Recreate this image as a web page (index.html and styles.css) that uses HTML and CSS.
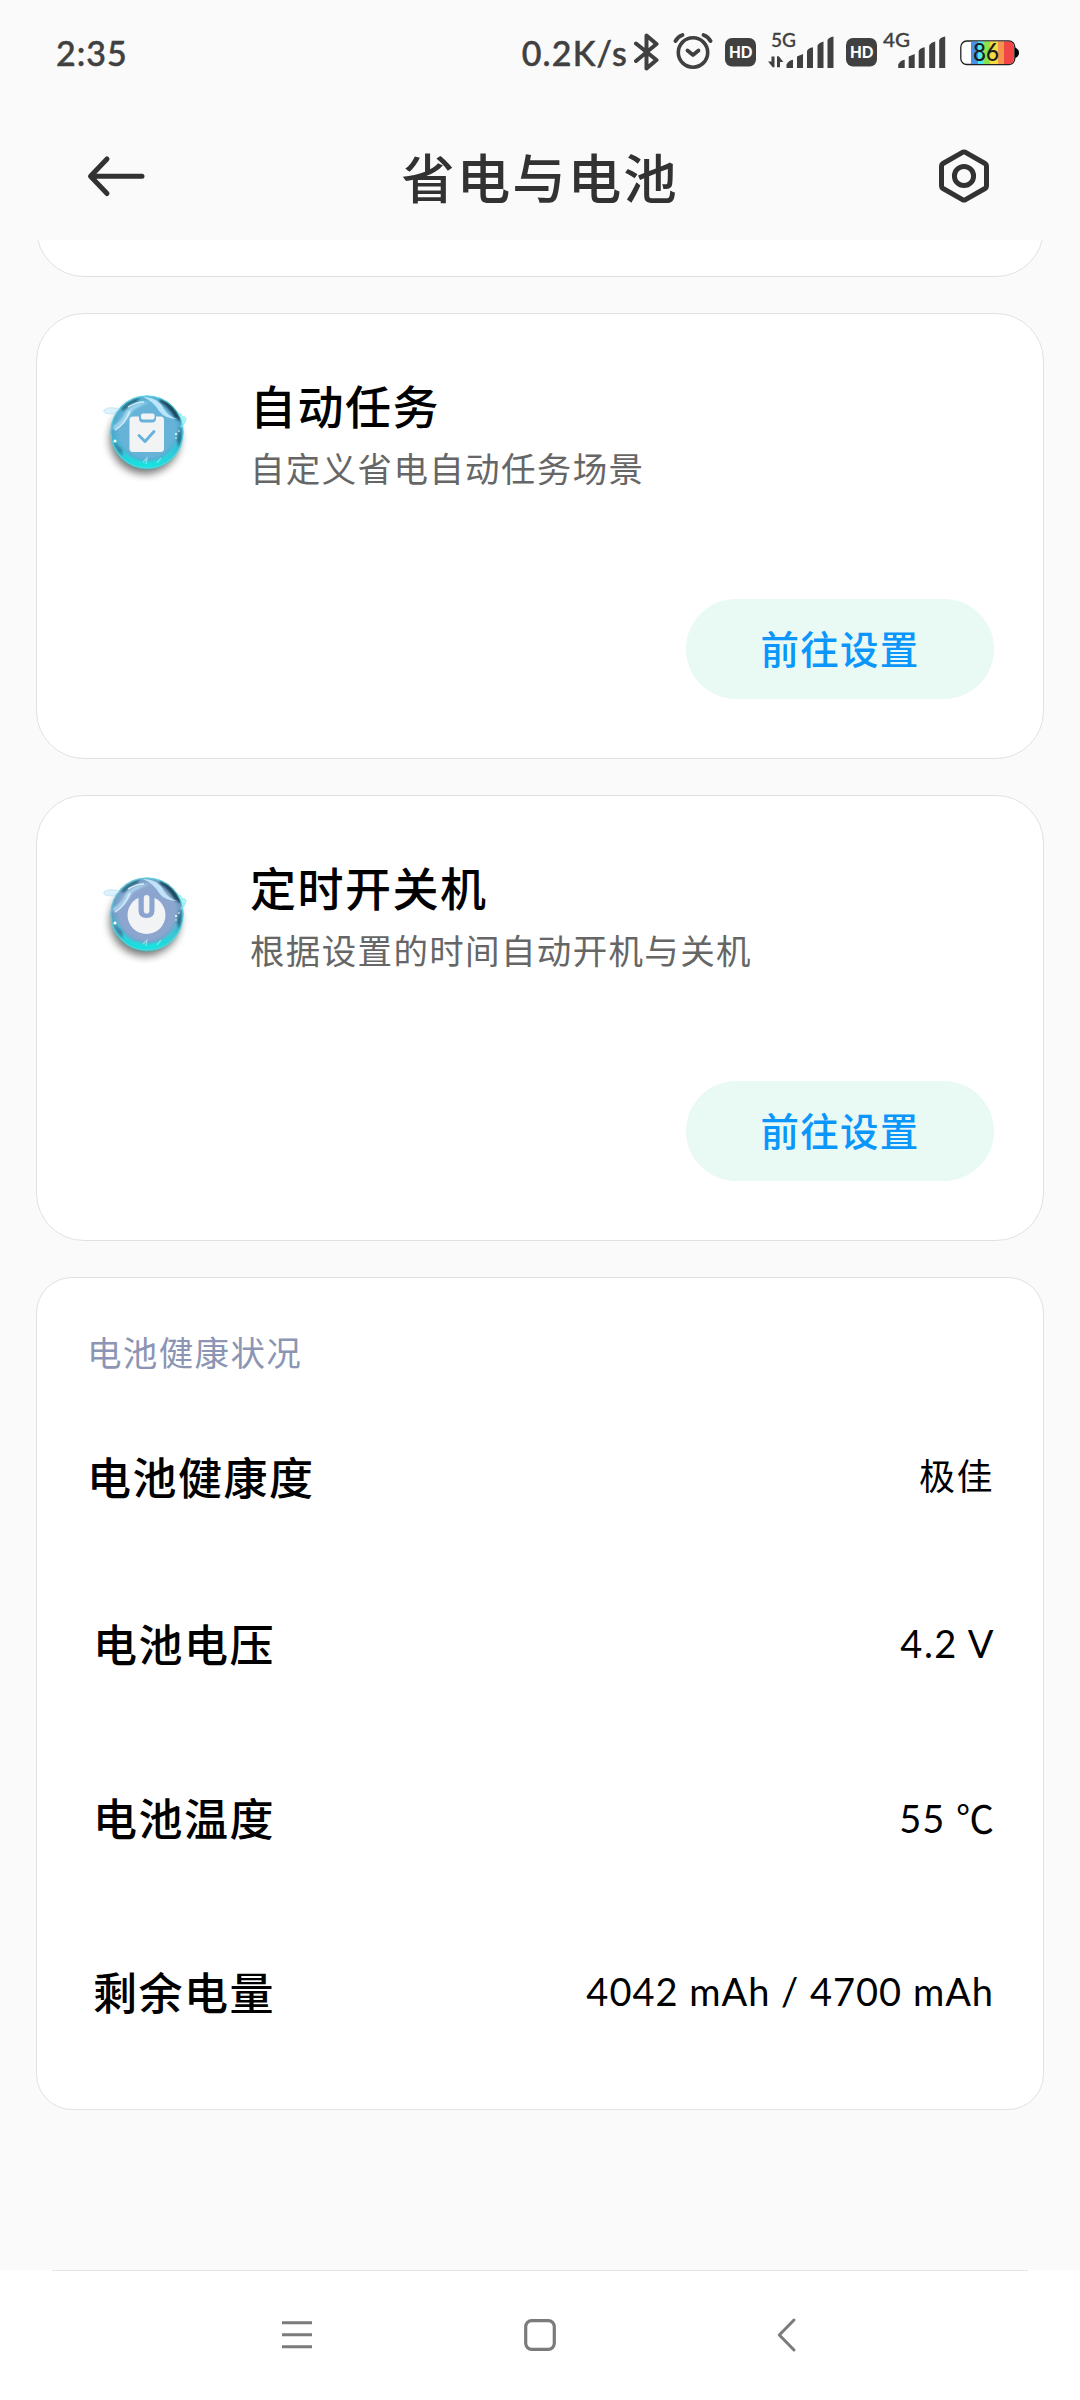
FILE: index.html
```html
<!DOCTYPE html>
<html lang="zh-CN">
<head>
<meta charset="utf-8">
<title>省电与电池</title>
<link rel="stylesheet" href="styles.css">
</head>
<body>
<div class="phone">
  <div class="status">
    <span class="clock">2:35</span>
    <div class="status-right">
      <span class="speed">0.2K/s</span>
      <svg class="bt" width="26" height="40" viewBox="0 0 26 40"><path d="M2 11.500L22.500 28 12.500 36.500V3.500L22.500 12 2 29" fill="none" stroke="#404040" stroke-width="4" stroke-linecap="round" stroke-linejoin="round"/></svg>
      <svg class="alarm" width="40" height="38" viewBox="0 0 40 38"><g fill="none" stroke="#404040" stroke-linecap="round" stroke-linejoin="round"><circle cx="20" cy="20.500" r="14.700" stroke-width="3.600"/><path d="M14.500 18.500L20 23l5.500-4.500" stroke-width="3.800"/><path d="M2.500 9Q5 4.500 9.500 3M37.500 9Q35 4.500 30.500 3" stroke-width="3.800"/></g></svg>
      <svg class="hd" width="31" height="29" viewBox="0 0 31 29"><rect width="31" height="28.500" rx="7" fill="#404040"/><text x="4" y="20" textLength="23.500" lengthAdjust="spacingAndGlyphs" class="hd-text">HD</text></svg>
      <svg class="sig5" width="67" height="46" viewBox="0 -8 67 46"><text x="3" y="17" textLength="25" lengthAdjust="spacingAndGlyphs" class="net">5G</text><g fill="#404040"><path d="M3.500 26.500h3V37.300h-1.800L0 31.500h3.500zM9 26.300h1.800l4.500 5.800h-3.300v5.200H9z"/><path d="M18.500 38v-3.500q2-4 6.500-4.800V38zM29 38V26.500L35 24v14zM39 38V21q1.500-3 6-3.700V38zM49.500 38V15.500q1.500-3 6-4V38zM59.500 38V10q1.500-3 6-3.500V38z"/></g></svg>
      <svg class="hd" width="31" height="29" viewBox="0 0 31 29"><rect width="31" height="28.500" rx="7" fill="#404040"/><text x="4" y="20" textLength="23.500" lengthAdjust="spacingAndGlyphs" class="hd-text">HD</text></svg>
      <svg class="sig4" width="64" height="46" viewBox="0 -8 64 46"><text x="0" y="17" textLength="27" lengthAdjust="spacingAndGlyphs" class="net">4G</text><g transform="translate(-3.300 0)" fill="#404040"><path d="M18.500 38v-3.500q2-4 6.500-4.800V38zM29 38V26.500L35 24v14zM39 38V21q1.500-3 6-3.700V38zM49.500 38V15.500q1.500-3 6-4V38zM59.500 38V10q1.500-3 6-3.500V38z"/></g></svg>
      <svg class="battery" width="60" height="38" viewBox="0 -6 60 38">
        <defs><clipPath id="cell"><rect x="2" y="1.500" width="52" height="22.500" rx="5"/></clipPath></defs>
        <rect x=".8" y="1" width="54" height="23.500" rx="6" fill="#fff" stroke="#222" stroke-width="1.300"/>
        <g clip-path="url(#cell)"><path fill="#4a90e8" d="M11 0h7v26h-7z"/><path fill="#4ee6f0" d="M18 0h6v26h-6z"/><path fill="#8be34c" d="M24 0h6v26h-6z"/><path fill="#f2dc45" d="M30 0h8v26h-8z"/><path fill="#f3954a" d="M38 0h6v26h-6z"/><path fill="#f24646" d="M44 0h12v26H44z"/></g>
        <path d="M55 7.500q4 1.500 4 5.300t-4 5.300z" fill="#000"/>
        <text x="13" y="20.500" textLength="26" lengthAdjust="spacingAndGlyphs" class="pct">86</text>
      </svg>
    </div>
  </div>

  <header class="header">
    <svg width="60" height="44" viewBox="0 0 60 44"><path d="M20 5L3.500 22.300 20 39.500M4 22.300h51" fill="none" stroke="#323232" stroke-width="5" stroke-linecap="round" stroke-linejoin="round"/></svg>
    <h1 class="title">省电与电池</h1>
    <svg width="52" height="56" viewBox="0 0 52 56"><g fill="none" stroke="#323232" stroke-width="5" stroke-linejoin="round"><path d="M24.500 4.300q1.500-.8 3 0L47 15.500q1.500.9 1.500 2.500v20q0 1.600-1.500 2.500L27.500 51.700q-1.500.8-3 0L5 40.500Q3.500 39.600 3.500 38V18q0-1.600 1.500-2.500z"/><circle cx="26" cy="28" r="9.600"/></g></svg>
  </header>

  <main class="content">
    <section class="card card-stub"></section>

    <section class="card feature">
      <div class="feature-head">
        <svg class="orb" width="100" height="100" viewBox="0 0 100 100">
          <defs>
            <radialGradient id="glass" cx=".5" cy=".46" r=".54"><stop offset="0" stop-color="#67b2d9"/><stop offset=".7" stop-color="#66b3d8"/><stop offset=".88" stop-color="#4ea6cb"/><stop offset="1" stop-color="#3b98b8"/></radialGradient>
            <radialGradient id="glass2" cx=".5" cy=".46" r=".54"><stop offset="0" stop-color="#8ba3d0"/><stop offset=".7" stop-color="#8ca6cf"/><stop offset=".88" stop-color="#6a9cc2"/><stop offset="1" stop-color="#3b92b2"/></radialGradient>
            <linearGradient id="rim" x1="0" y1="0" x2="0" y2="1"><stop offset=".5" stop-color="#23dfe5" stop-opacity="0"/><stop offset="1" stop-color="#14e3e0"/></linearGradient>
            <filter id="soft" x="-50%" y="-50%" width="200%" height="200%"><feGaussianBlur stdDeviation="4.500"/></filter>
            <filter id="haze" x="-20%" y="-20%" width="140%" height="140%"><feGaussianBlur stdDeviation="1.200"/></filter>
            <clipPath id="ball"><circle cx="50" cy="50" r="36.500"/></clipPath>
            <g id="shine">
              <circle cx="50" cy="50" r="33" fill="none" stroke="url(#rim)" stroke-width="7" filter="url(#haze)"/>
              <g clip-path="url(#ball)">
                <g filter="url(#haze)">
                  <path d="M64 17Q80 22 85 40l-7-4Q72 26 62 19z" fill="#1b4a5e"/>
                  <path d="M24 27Q30 19 43 15l-3 5q-7 2-13 9z" fill="#2a6a82"/>
                  <path d="M83 45q3 10-1 20l-2-7z" fill="#2a6885"/>
                  <path d="M16 59q3 10 10 15l-1-7z" fill="#3a82a6"/>
                  <path d="M16 44q9-4 13-15 9-9 24-9-12 4-18 9-5 11-19 19z" fill="#b4e2f8" opacity=".8"/>
                </g>
                <path d="M46 15q15 0 21 12 5 8 14 10-13 0-19-8-5-9-16-14z" fill="#c9edff" opacity=".85"/>
                <path d="M18 48q10-6 15-19M31 25q8-5 16-5" fill="none" stroke="#e2f6ff" stroke-width="1.500" opacity=".8"/>
                <path d="M46 80l4-4-1 6M60 81l4-5" fill="none" stroke="#bdf7f5" stroke-width="1.200" opacity=".6"/>
              </g>
              <circle cx="50" cy="50" r="36" fill="none" stroke="#5ce8ee" stroke-width="1.300" opacity=".6"/>
              <path d="M17 32Q5 32 7 28q4-4 15-1z" fill="#d8f0fc" stroke="#b9e2f6" stroke-width="1" opacity=".85"/>
              <path d="M82 31q4 3 4 9M85 35q5 0 3 4t-4 6" fill="none" stroke="#83edf1" stroke-width="2" opacity=".8"/>
              <g fill="#fff"><circle cx="79" cy="52" r="1"/><circle cx="82" cy="49" r=".8"/><circle cx="79" cy="56" r=".7"/><circle cx="18" cy="59" r="1.500"/></g>
            </g>
          </defs>
          <circle cx="48" cy="57" r="35" fill="#000" opacity=".55" filter="url(#soft)"/>
          <circle cx="50" cy="50" r="36.500" fill="url(#glass)"/>
          <use href="#shine"/>
          <path fill="#f2f3f4" d="M37 34.500h5v2q0 4 4 4h9q4 0 4-4v-2h4.500q3.500 0 3.500 3.500v28.500q0 3.500-3.500 3.500H36q-3.500 0-3.500-3.500V38q0-3.500 3.500-3.500z"/>
          <rect x="44" y="31.500" width="13.500" height="6" rx="1.800" fill="#f2f3f4"/>
          <path d="M42 53.500l6 6 9-10" fill="none" stroke="#67b2d9" stroke-width="2.900" stroke-linecap="round" stroke-linejoin="round"/>
        </svg>
        <div class="feature-text">
          <h2 class="feature-title">自动任务</h2>
          <p class="feature-sub">自定义省电自动任务场景</p>
        </div>
      </div>
      <button class="go">前往设置</button>
    </section>

    <section class="card feature">
      <div class="feature-head">
        <svg class="orb" width="100" height="100" viewBox="0 0 100 100">
          <circle cx="48" cy="57" r="35" fill="#000" opacity=".55" filter="url(#soft)"/>
          <circle cx="50" cy="50" r="36.500" fill="url(#glass2)"/>
          <use href="#shine"/>
          <circle cx="49.500" cy="51" r="19" fill="#f2f3f4"/>
          <path d="M41.500 28h16v18q0 8-8 8t-8-8z" fill="#8ba4d0"/>
          <rect x="46.800" y="31" width="5.600" height="18.500" rx="2.800" fill="#f2f3f4"/>
        </svg>
        <div class="feature-text">
          <h2 class="feature-title">定时开关机</h2>
          <p class="feature-sub">根据设置的时间自动开机与关机</p>
        </div>
      </div>
      <button class="go">前往设置</button>
    </section>

    <section class="card health">
      <h3 class="health-title">电池健康状况</h3>
      <dl class="rows">
        <div class="row row-first"><dt>电池健康度</dt><dd class="zh">极佳</dd></div>
        <div class="row"><dt>电池电压</dt><dd class="volt">4.2 V</dd></div>
        <div class="row"><dt>电池温度</dt><dd class="temp">55 ℃</dd></div>
        <div class="row"><dt>剩余电量</dt><dd class="charge">4042 mAh / 4700 mAh</dd></div>
      </dl>
    </section>
  </main>

  <nav class="nav">
    <svg width="34" height="36" viewBox="0 0 34 36"><path d="M2 5.700h30M2 17.700h30M2 29.700h30" stroke="#7b7b7b" stroke-width="3"/></svg>
    <svg width="36" height="36" viewBox="0 0 36 36"><rect x="3.700" y="3.700" width="28.600" height="28.600" rx="6" fill="none" stroke="#7b7b7b" stroke-width="3.200"/></svg>
    <svg width="24" height="36" viewBox="0 0 24 36"><path d="M19 3L4.300 18 19 33" fill="none" stroke="#7b7b7b" stroke-width="3" stroke-linecap="round" stroke-linejoin="round"/></svg>
  </nav>
</div>
</body>
</html>
```
FILE: styles.css
```css
* { box-sizing: border-box; margin: 0; padding: 0; }

body {
  background: #fafafa;
  font-family: Lato, "Noto Sans CJK SC", sans-serif;
  color: #000;
}

svg { display: block; flex: none; }

.phone {
  display: flex;
  flex-direction: column;
  width: 1080px;
  height: 2400px;
  overflow: hidden;
}

.status {
  display: flex;
  justify-content: space-between;
  height: 112px;
  padding: 22px 60px 0 56px;
  color: #404040;
}
.clock, .speed {
  margin-top: 9px;
  font-size: 34px;
  line-height: 44px;
  font-weight: 500;
  -webkit-text-stroke: .5px #404040;
}
.clock { letter-spacing: 1px; }
.speed { letter-spacing: 1.2px; }
.status-right { display: flex; align-items: flex-start; }
.bt { margin: 10px 0 0 6px; }
.alarm { margin: 10px 0 0 13px; }
.hd { margin: 16px 0 0 12px; }
.sig5 { margin-left: 12px; }
.sig5 + .hd { margin-left: 11px; }
.sig4 { margin-left: 6px; }
.battery { margin: 12px 0 0 13px; }
.hd-text { font: 900 17px Lato, sans-serif; fill: #fff; }
.net { font: 500 19px Lato, sans-serif; fill: #404040; stroke: #404040; stroke-width: .3px; }
.pct { font: 500 24px Lato, sans-serif; fill: #1c1c1c; }

.header {
  display: flex;
  align-items: center;
  justify-content: space-between;
  height: 128px;
  padding: 0 90px 0 87px;
}
.title {
  margin: 4px 0 0 -5px;
  font-size: 53.500px;
  line-height: 76px;
  font-weight: 500;
  letter-spacing: 2px;
  color: #323232;
}

.content {
  display: flex;
  flex-direction: column;
  gap: 36px;
  height: 2030px;
  padding: 0 36px;
  overflow: hidden;
}
.card {
  flex: none;
  background: #fff;
  border: 1px solid #e1e1e1;
  border-radius: 48px;
}
.card-stub { height: 120px; margin-top: -83px; }

.feature {
  display: flex;
  flex-direction: column;
  justify-content: space-between;
  height: 446px;
  padding: 60px 49px 59px 60px;
}
.feature-head { display: flex; gap: 53px; }
.orb { margin-top: 8px; }
.feature-text { padding-top: 3px; }
.feature-title { font-size: 46px; line-height: 60px; font-weight: 500; letter-spacing: 1.500px; }
.feature-sub { margin-top: 6px; font-size: 34.500px; line-height: 52px; letter-spacing: 1.350px; color: #666; }
.go {
  align-self: flex-end;
  width: 308px;
  height: 100px;
  padding-bottom: 4px;
  border: 0;
  border-radius: 50px;
  background: #e9f9f3;
  color: #0a96fb;
  font-family: inherit;
  font-size: 38.500px;
  font-weight: 500;
  letter-spacing: 1.300px;
}

.health {
  height: 833px;
  padding: 49px 50px 0 50px;
  border-radius: 36px;
}
.health-title {
  font-size: 34.500px;
  line-height: 52px;
  font-weight: 400;
  letter-spacing: 1.350px;
  color: #8c95b3;
}
.row {
  display: flex;
  justify-content: space-between;
  align-items: center;
  height: 174px;
  padding-left: 6px;
}
.row-first { height: 160px; padding-left: 0; margin-top: 17px; }
dt { font-size: 44px; font-weight: 500; letter-spacing: 1.500px; }
dd { font-size: 38px; white-space: pre; }
.zh { padding-bottom: 4px; font-size: 36px; letter-spacing: 1.500px; margin-right: -1px; }
.volt { letter-spacing: 1.500px; margin-right: -2px; }
.temp { padding-bottom: 2px; letter-spacing: 1px; margin-right: -2px; }
.charge { letter-spacing: 1px; margin-right: -1px; }

.nav {
  display: flex;
  align-items: center;
  height: 130px;
  padding-left: 280px;
  background: linear-gradient(#e5e5e5, #e5e5e5) 52px 0 / 976px 1px no-repeat #fff;
}
.nav svg + svg { margin-left: 208px; }
.nav svg:last-child { margin-left: 217px; }
```
